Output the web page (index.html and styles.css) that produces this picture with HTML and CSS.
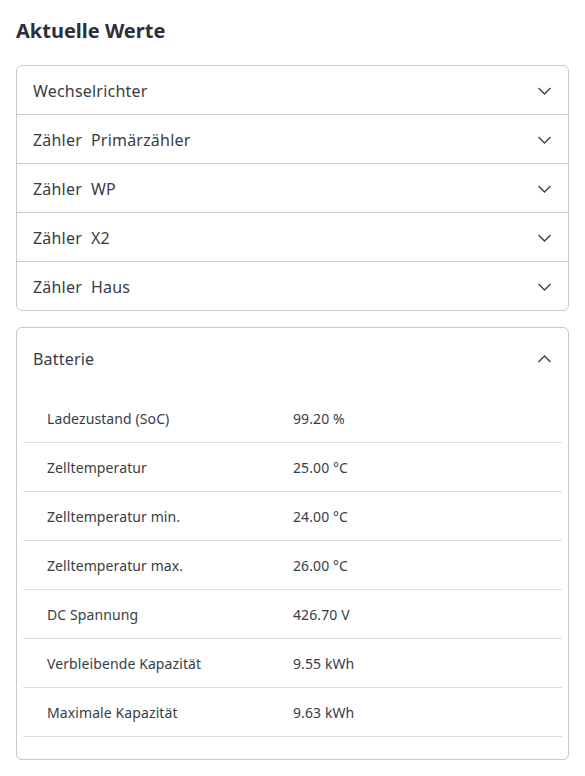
FILE: index.html
```html
<!DOCTYPE html>
<html lang="de">
<head>
<meta charset="utf-8">
<link rel="stylesheet" href="styles.css">
</head>
<body>
<main class="page">
  <h1 class="title">Aktuelle Werte</h1>
  <section class="accordion">
    <div class="acc-item"><span class="acc-label">Wechselrichter</span><svg class="chev" viewBox="0 0 14 8"><path d="M1 1l6 6 6-6"/></svg></div>
    <div class="acc-item"><span class="acc-label">Zähler<span class="sub">Primärzähler</span></span><svg class="chev" viewBox="0 0 14 8"><path d="M1 1l6 6 6-6"/></svg></div>
    <div class="acc-item"><span class="acc-label">Zähler<span class="sub">WP</span></span><svg class="chev" viewBox="0 0 14 8"><path d="M1 1l6 6 6-6"/></svg></div>
    <div class="acc-item"><span class="acc-label">Zähler<span class="sub">X2</span></span><svg class="chev" viewBox="0 0 14 8"><path d="M1 1l6 6 6-6"/></svg></div>
    <div class="acc-item"><span class="acc-label">Zähler<span class="sub">Haus</span></span><svg class="chev" viewBox="0 0 14 8"><path d="M1 1l6 6 6-6"/></svg></div>
  </section>
  <section class="accordion open">
    <div class="acc-item head"><span class="acc-label">Batterie</span><svg class="chev" viewBox="0 0 14 8"><path d="M1 7l6-6 6 6"/></svg></div>
    <div class="acc-body">
      <div class="row"><span class="k">Ladezustand (SoC)</span><span class="v">99.20 %</span></div>
      <div class="row"><span class="k">Zelltemperatur</span><span class="v">25.00 °C</span></div>
      <div class="row"><span class="k">Zelltemperatur min.</span><span class="v">24.00 °C</span></div>
      <div class="row"><span class="k">Zelltemperatur max.</span><span class="v">26.00 °C</span></div>
      <div class="row"><span class="k">DC Spannung</span><span class="v">426.70 V</span></div>
      <div class="row"><span class="k">Verbleibende Kapazität</span><span class="v">9.55 kWh</span></div>
      <div class="row"><span class="k">Maximale Kapazität</span><span class="v">9.63 kWh</span></div>
    </div>
  </section>
</main>
</body>
</html>
```
FILE: styles.css
```css
* { box-sizing: border-box; }
html, body { margin: 0; background: #fff; }
body {
  font-family: "Noto Sans", "Open Sans", sans-serif;
  color: #373d46;
}
.page {
  padding: 16px 16px 0;
  display: flex;
  flex-direction: column;
}
.title {
  margin: 0 0 19px;
  font-size: 20px;
  line-height: 30px;
  font-weight: 700;
  color: #2a313c;
}
.accordion {
  border: 1px solid #c9c9c9;
  border-radius: 6px;
  margin-bottom: 16px;
}
.acc-item {
  height: 49px;
  display: flex;
  align-items: center;
  justify-content: space-between;
  padding: 2px 16px 0 16px;
  border-top: 1px solid #c9c9c9;
  font-size: 16px;
  letter-spacing: 0.2px;
  color: #373d46;
}
.acc-item:first-child { border-top: none; height: 48px; }
.acc-item.head { height: 63px; padding-top: 0; padding-bottom: 2px; }
.sub { margin-left: 9px; }
.chev {
  width: 15px;
  height: 8px;
  fill: none;
  stroke: #3a4350;
  stroke-width: 1.4;
}
.acc-body {
  padding: 3px 6px 22px;
}
.row {
  display: grid;
  grid-template-columns: 246px 1fr;
  height: 49px;
  align-items: center;
  border-bottom: 1px solid #dedede;
  font-size: 14px;
  letter-spacing: 0.1px;
  color: #373d46;
}
.k { padding-left: 24px; }
.v { padding-left: 24px; }
```
